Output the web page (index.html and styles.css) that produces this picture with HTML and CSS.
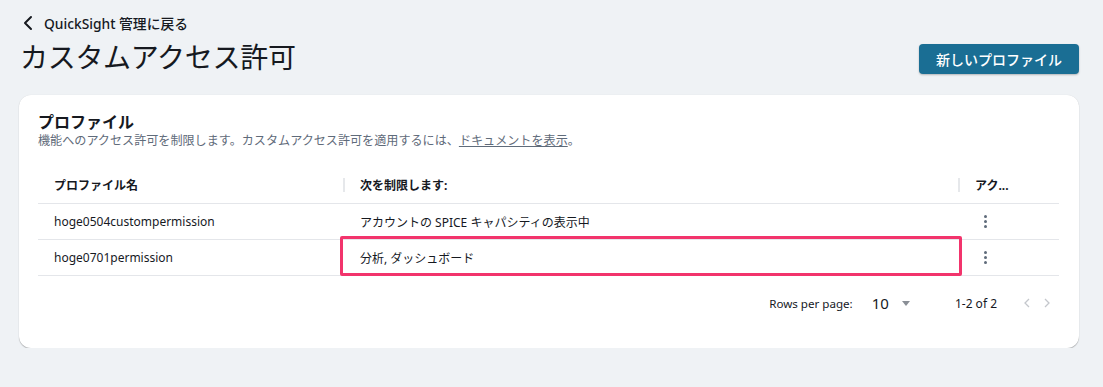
FILE: index.html
```html
<!DOCTYPE html>
<html lang="ja">
<head>
<meta charset="utf-8">
<link rel="stylesheet" href="styles.css">
</head>
<body>
<div class="page">
  <a class="back" href="#">
    <svg class="back-icon" width="12" height="16" viewBox="0 0 12 16"><path d="M9 2 L3 8 L9 14" fill="none" stroke="#16191f" stroke-width="2" stroke-linecap="round" stroke-linejoin="round"/></svg>
    <span>QuickSight 管理に戻る</span>
  </a>
  <div class="header">
    <h1 class="title">カスタムアクセス許可</h1>
    <button class="btn-primary">新しいプロファイル</button>
  </div>
  <section class="card">
    <h2 class="card-title">プロファイル</h2>
    <p class="card-desc">機能へのアクセス許可を制限します。カスタムアクセス許可を適用するには、<a href="#">ドキュメントを表示</a>。</p>
    <div class="table">
      <div class="row head">
        <div class="cell">プロファイル名</div>
        <div class="cell sep">次を制限します:</div>
        <div class="cell sep">アク...</div>
      </div>
      <div class="row">
        <div class="cell">hoge0504custompermission</div>
        <div class="cell">アカウントの SPICE キャパシティの表示中</div>
        <div class="cell"><span class="kebab"><i></i><i></i><i></i></span></div>
      </div>
      <div class="row">
        <div class="cell">hoge0701permission</div>
        <div class="cell highlight">分析, ダッシュボード</div>
        <div class="cell"><span class="kebab"><i></i><i></i><i></i></span></div>
      </div>
    </div>
    <div class="pager">
      <span class="pager-label">Rows per page:</span>
      <span class="pager-select">10<span class="caret"></span></span>
      <span class="pager-range">1-2 of 2</span>
      <span class="pager-nav">
        <svg width="8" height="12" viewBox="0 0 8 12"><path d="M6 2 L2 6 L6 10" fill="none" stroke="#c4c7cc" stroke-width="1.3"/></svg>
        <svg width="8" height="12" viewBox="0 0 8 12"><path d="M2 2 L6 6 L2 10" fill="none" stroke="#c4c7cc" stroke-width="1.3"/></svg>
      </span>
    </div>
  </section>
</div>
</body>
</html>
```

FILE: styles.css
```css
* { box-sizing: border-box; }
html, body { margin: 0; padding: 0; }
body {
  background: #eff2f5;
  font-family: "Noto Sans", "Noto Sans CJK JP", sans-serif;
  color: #16191f;
}
.page {
  padding: 14px 24px 0 19px;
}
.back {
  display: flex;
  align-items: center;
  gap: 10px;
  height: 18px;
  padding-left: 3px;
  color: #16191f;
  text-decoration: none;
  font-size: 13.8px;
  font-weight: 500;
}
.back-icon { display: block; }
.header {
  margin-top: 5px;
  height: 40px;
  display: flex;
  align-items: center;
  justify-content: space-between;
}
.title {
  margin: 0;
  padding-left: 1px;
  font-size: 28px;
  line-height: 40px;
  font-weight: 400;
  letter-spacing: -0.3px;
}
.btn-primary {
  margin-top: 3px;
  height: 30px;
  width: 160px;
  border: none;
  border-radius: 4px;
  background: #1a6e94;
  color: #fff;
  font-family: inherit;
  font-size: 14px;
  font-weight: 500;
  box-shadow: 0 1px 2px rgba(0,0,0,0.25);
  padding: 0 15px;
}
.card {
  margin-top: 18px;
  background: #fff;
  border-radius: 12px;
  box-shadow: 0 1px 1px rgba(0,0,0,0.25), 0 0 1px rgba(0,0,0,0.12);
  padding: 16px 20px 26px 19px;
}
.card-title {
  margin: 0;
  font-size: 16px;
  line-height: 22px;
  font-weight: 700;
}
.card-desc {
  margin: 0;
  font-size: 12.1px;
  line-height: 16px;
  color: #5f6b7a;
}
.card-desc a { color: #5f6b7a; }
.table { margin-top: 17px; }
.row {
  display: grid;
  grid-template-columns: 306px 615px 1fr;
  height: 36px;
  border-bottom: 1px solid #e4e6ea;
  font-size: 12px;
}
.row.head {
  height: 38px;
  font-weight: 700;
}
.cell {
  position: relative;
  display: flex;
  align-items: center;
  padding-left: 16px;
}
.head .cell { padding-top: 1px; }
.cell.sep::before {
  content: "";
  position: absolute;
  left: -1px;
  top: 12px;
  width: 2px;
  height: 14px;
  background: #e6e8eb;
}
.highlight::after {
  content: "";
  position: absolute;
  top: -4px;
  bottom: -1px;
  left: -4px;
  right: -3px;
  border: 3px solid #f2346c;
  border-radius: 2px;
}
.kebab {
  display: flex;
  flex-direction: column;
  gap: 2px;
  margin-left: 9px;
}
.kebab i {
  display: block;
  width: 3px;
  height: 3px;
  border-radius: 50%;
  background: #5f6b7a;
}
.pager {
  margin-top: 8px;
  height: 38px;
  display: flex;
  align-items: center;
  justify-content: flex-end;
  padding-right: 8px;
  font-size: 12px;
}
.pager-label { margin-right: 19px; font-size: 11.6px; }
.pager-select {
  display: flex;
  align-items: center;
  font-size: 15px;
}
.caret {
  margin-left: 13px;
  width: 0;
  height: 0;
  border-left: 4.5px solid transparent;
  border-right: 4.5px solid transparent;
  border-top: 5px solid #8a8f96;
}
.pager-range { margin-left: 45px; }
.pager-nav {
  display: flex;
  gap: 12px;
  margin-left: 26px;
}
.pager-nav svg { display: block; }
```
